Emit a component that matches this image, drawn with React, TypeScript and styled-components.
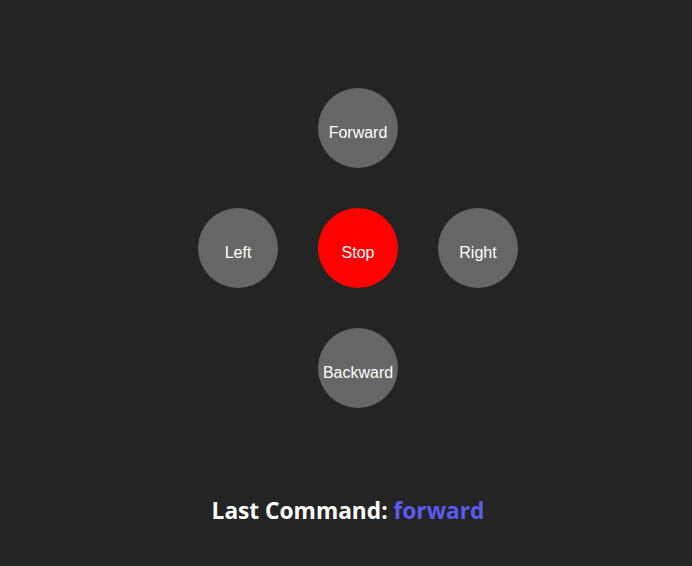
import React, { useState } from "react";
import styled, { createGlobalStyle } from "styled-components";

const Global = createGlobalStyle`
  html, body { margin: 0; padding: 0; background: #242424; }
  body { font-family: "Liberation Sans", Arial, sans-serif; }
`;

const Page = styled.div`
  min-height: 100vh;
  box-sizing: border-box;
  display: flex;
  flex-direction: column;
  align-items: center;
  padding-top: 88px;
`;

const Pad = styled.div`
  display: grid;
  grid-template-columns: repeat(3, 80px);
  grid-template-rows: repeat(3, 80px);
  gap: 40px;
  padding-left: 24px;
`;

const Btn = styled.button<{ $col: number; $row: number; $stop?: boolean }>`
  grid-column: ${(p) => p.$col};
  grid-row: ${(p) => p.$row};
  width: 80px;
  height: 80px;
  border-radius: 50%;
  border: none;
  padding: 10px 0 0;
  background: ${(p) => (p.$stop ? "#ff0000" : "#666666")};
  color: #ffffff;
  font-family: "Liberation Sans", Arial, sans-serif;
  font-size: 16px;
  cursor: pointer;
  display: flex;
  align-items: center;
  justify-content: center;
`;

const Status = styled.h2`
  margin: 87px 0 0 4px;
  font-family: "Open Sans", sans-serif;
  font-weight: 700;
  font-size: 22.7px;
  line-height: 32px;
  color: #ffffff;
`;

const Cmd = styled.span`
  color: #5b5bef;
`;

export default function App() {
  const [last, setLast] = useState("forward");
  return (
    <>
      <Global />
      <Page>
        <Pad>
          <Btn $col={2} $row={1} onClick={() => setLast("forward")}>Forward</Btn>
          <Btn $col={1} $row={2} onClick={() => setLast("left")}>Left</Btn>
          <Btn $col={2} $row={2} $stop onClick={() => setLast("stop")}>Stop</Btn>
          <Btn $col={3} $row={2} onClick={() => setLast("right")}>Right</Btn>
          <Btn $col={2} $row={3} onClick={() => setLast("backward")}>Backward</Btn>
        </Pad>
        <Status>
          Last Command: <Cmd>{last}</Cmd>
        </Status>
      </Page>
    </>
  );
}
